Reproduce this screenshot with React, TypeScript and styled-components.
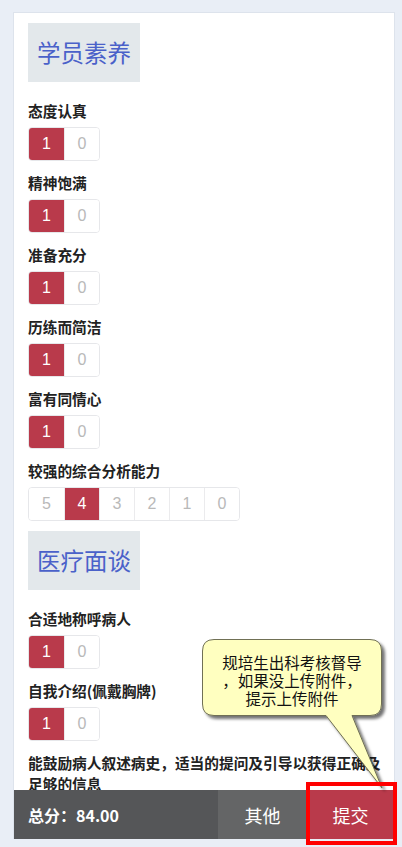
import styled, { createGlobalStyle } from "styled-components";

const GlobalStyle = createGlobalStyle`
  html, body {
    margin: 0;
    padding: 0;
    background: #e9eef6;
    font-family: "Liberation Sans", "Noto Sans CJK SC", sans-serif;
  }
  * {
    box-sizing: border-box;
  }
`;

interface Item {
  label: string;
  options: number[];
  value: number;
}

interface Section {
  title: string;
  items: Item[];
}

const sections: Section[] = [
  {
    title: "学员素养",
    items: [
      { label: "态度认真", options: [1, 0], value: 1 },
      { label: "精神饱满", options: [1, 0], value: 1 },
      { label: "准备充分", options: [1, 0], value: 1 },
      { label: "历练而简洁", options: [1, 0], value: 1 },
      { label: "富有同情心", options: [1, 0], value: 1 },
      { label: "较强的综合分析能力", options: [5, 4, 3, 2, 1, 0], value: 4 },
    ],
  },
  {
    title: "医疗面谈",
    items: [
      { label: "合适地称呼病人", options: [1, 0], value: 1 },
      { label: "自我介绍(佩戴胸牌)", options: [1, 0], value: 1 },
      {
        label: "能鼓励病人叙述病史，适当的提问及引导以获得正确及足够的信息",
        options: [1, 0],
        value: 1,
      },
    ],
  },
];

export default function App() {
  return (
    <>
      <GlobalStyle />
      <Page>
        <Card>
          <Content>
            {sections.map((section, si) => (
              <SectionBlock key={section.title} $first={si === 0}>
                <SectionTitle>{section.title}</SectionTitle>
                {section.items.map((item) => (
                  <ItemBlock key={item.label}>
                    <ItemLabel>{item.label}</ItemLabel>
                    <ScoreGroup>
                      {item.options.map((opt) => (
                        <ScoreButton key={opt} $active={opt === item.value}>
                          {opt}
                        </ScoreButton>
                      ))}
                    </ScoreGroup>
                  </ItemBlock>
                ))}
              </SectionBlock>
            ))}
          </Content>

          <FooterBar>
            <Total>总分：84.00</Total>
            <OtherButton>其他</OtherButton>
            <SubmitButton>提交</SubmitButton>
          </FooterBar>
        </Card>

        <Callout>
          <svg width="190" height="160" viewBox="0 0 190 160">
            <defs>
              <filter id="shadow" x="-10%" y="-10%" width="130%" height="130%">
                <feDropShadow dx="3" dy="3" stdDeviation="1.5" floodColor="#000" floodOpacity="0.55" />
              </filter>
            </defs>
            <path
              d="M12,0.5 H168 Q179.5,0.5 179.5,12 V65 Q179.5,76.5 168,76.5 H150 L180,149 L124,76.5 H12 Q0.5,76.5 0.5,65 V12 Q0.5,0.5 12,0.5 Z"
              fill="#ffffc0"
              stroke="#6f6f55"
              strokeWidth="1"
              filter="url(#shadow)"
            />
          </svg>
          <CalloutText>
            规培生出科考核督导
            <br />
            ，如果没上传附件，
            <br />
            提示上传附件
          </CalloutText>
        </Callout>

        <Highlight />
      </Page>
    </>
  );
}

const Page = styled.div`
  position: relative;
  width: 402px;
  height: 847px;
  padding: 12px 7px 8px 13px;
  display: flex;
  flex-direction: column;
  overflow: hidden;
`;

const Card = styled.div`
  flex: 1;
  min-height: 0;
  display: flex;
  flex-direction: column;
  background: #ffffff;
  border: 1px solid #dde3ec;
  border-bottom: none;
  overflow: hidden;
`;

const Content = styled.div`
  flex: 1;
  min-height: 0;
  overflow: hidden;
  padding: 10px 13px 0 14px;
`;

const SectionBlock = styled.div<{ $first: boolean }>`
  margin-top: ${(props) => (props.$first ? "0" : "10px")};
`;

const SectionTitle = styled.div`
  display: inline-block;
  height: 59px;
  line-height: 59px;
  padding: 0 9px;
  background: #e3e8eb;
  color: #4a61c9;
  font-family: "Noto Sans CJK SC", sans-serif;
  font-size: 23.5px;
  margin-bottom: 7px;
`;

const ItemBlock = styled.div`
  padding-top: 11px;
`;

const ItemLabel = styled.div`
  color: #222222;
  font-family: "Noto Sans CJK SC", sans-serif;
  font-weight: 700;
  font-size: 14.7px;
  line-height: 21px;
  margin-bottom: 6px;
`;

const ScoreGroup = styled.div`
  display: inline-flex;
  border: 1px solid #e6e7ea;
  border-radius: 4px;
  overflow: hidden;
`;

const ScoreButton = styled.div<{ $active: boolean }>`
  width: 35px;
  height: 32px;
  display: flex;
  align-items: center;
  justify-content: center;
  font-family: "Liberation Sans", sans-serif;
  font-size: 16px;
  background: ${(props) => (props.$active ? "#b93a4b" : "#ffffff")};
  color: ${(props) => (props.$active ? "#ffffff" : "#b9b9b9")};

  & + & {
    border-left: 1px solid #ebebed;
  }
`;

const FooterBar = styled.div`
  height: 49px;
  display: flex;
  flex-shrink: 0;
  font-family: "Noto Sans CJK SC", sans-serif;
  color: #ffffff;
`;

const Total = styled.div`
  flex: 1;
  display: flex;
  align-items: center;
  padding-left: 14px;
  background: #555658;
  font-size: 16px;
  font-weight: 700;
`;

const OtherButton = styled.div`
  width: 89px;
  display: flex;
  align-items: center;
  justify-content: center;
  background: #646566;
  font-size: 18px;
`;

const SubmitButton = styled.div`
  width: 87px;
  display: flex;
  align-items: center;
  justify-content: center;
  background: #b93a4b;
  font-size: 18px;
`;

const Callout = styled.div`
  position: absolute;
  left: 202px;
  top: 639px;
  width: 190px;
  height: 160px;

  & > svg {
    display: block;
  }
`;

const CalloutText = styled.div`
  position: absolute;
  left: 0;
  top: 14px;
  width: 180px;
  text-align: center;
  font-family: "Noto Sans CJK SC", sans-serif;
  font-size: 15.5px;
  line-height: 18px;
  color: #111111;
`;

const Highlight = styled.div`
  position: absolute;
  left: 306px;
  top: 782px;
  width: 91px;
  height: 63px;
  border: 4px solid #ff0000;
`;
